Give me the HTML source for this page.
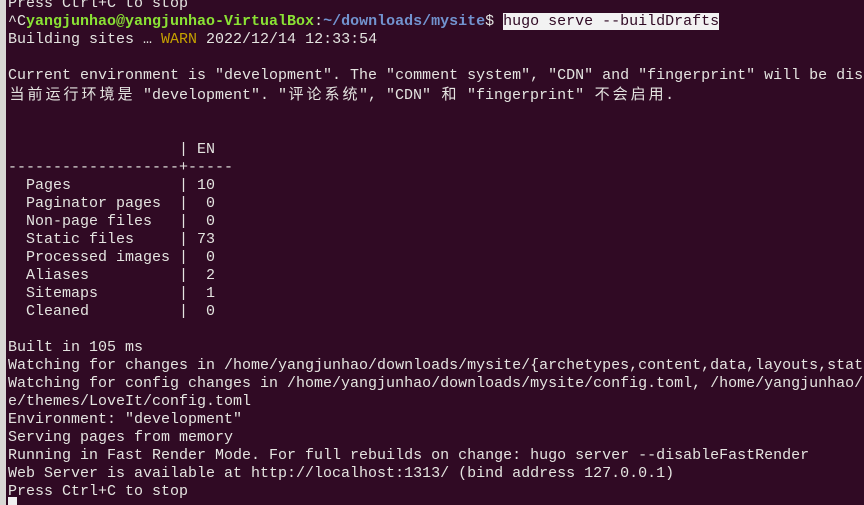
<!DOCTYPE html>
<html><head><meta charset="utf-8"><style>
html,body{margin:0;padding:0;width:864px;height:505px;overflow:hidden;background:#300a24;}
.strip{position:absolute;left:0;top:0;width:6px;height:505px;background:#d8d8d4;}
pre{position:absolute;left:8px;top:-5px;width:856px;height:510px;overflow:hidden;margin:0;font-family:"Liberation Mono","Noto Sans CJK SC",monospace;font-size:15px;line-height:18px;color:#e4e4e0;white-space:pre;}
.g{color:#8ae234;font-weight:bold}
.b{color:#7293cf;font-weight:bold}
.y{color:#c4a000}
.h{background:#f2f2f2;color:#300a24}
.c{display:inline-block;width:18px;text-align:center;font-family:"Noto Sans CJK SC",sans-serif;}
.cur{position:absolute;left:8px;top:497px;width:9px;height:8px;background:#f0f0f0}
</style></head><body>
<div class="strip"></div>
<pre>Press Ctrl+C to stop
^C<span class="g">yangjunhao@yangjunhao-VirtualBox</span>:<span class="b">~/downloads/mysite</span>$ <span class="h">hugo serve --buildDrafts</span>
Building sites … <span class="y">WARN</span> 2022/12/14 12:33:54

Current environment is "development". The "comment system", "CDN" and "fingerprint" will be disabled.
<span class="c">当</span><span class="c">前</span><span class="c">运</span><span class="c">行</span><span class="c">环</span><span class="c">境</span><span class="c">是</span> "development". "<span class="c">评</span><span class="c">论</span><span class="c">系</span><span class="c">统</span>", "CDN" <span class="c">和</span> "fingerprint" <span class="c">不</span><span class="c">会</span><span class="c">启</span><span class="c">用</span>.


                   | EN
-------------------+-----
  Pages            | 10
  Paginator pages  |  0
  Non-page files   |  0
  Static files     | 73
  Processed images |  0
  Aliases          |  2
  Sitemaps         |  1
  Cleaned          |  0

Built in 105 ms
Watching for changes in /home/yangjunhao/downloads/mysite/{archetypes,content,data,layouts,static}
Watching for config changes in /home/yangjunhao/downloads/mysite/config.toml, /home/yangjunhao/
e/themes/LoveIt/config.toml
Environment: "development"
Serving pages from memory
Running in Fast Render Mode. For full rebuilds on change: hugo server --disableFastRender
Web Server is available at http://localhost:1313/ (bind address 127.0.0.1)
Press Ctrl+C to stop</pre>
<div class="cur"></div>
</body></html>
